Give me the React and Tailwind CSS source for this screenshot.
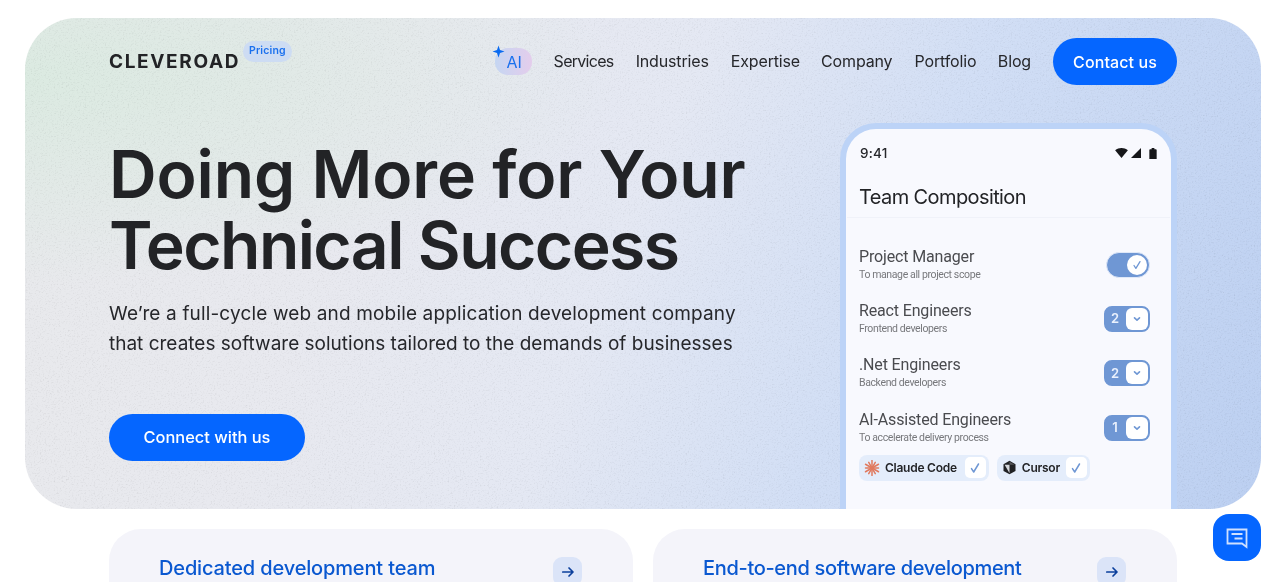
import React from "react";

const display = "font-['Inter','Liberation_Sans',sans-serif]";
const phoneFont = "font-['Roboto','Liberation_Sans',sans-serif]";

function Check({ className = "w-[14px] h-[14px]" }) {
  return (
    <svg viewBox="0 0 14 14" className={className} fill="none" stroke="#6f97d4" strokeWidth="1.5" strokeLinecap="round" strokeLinejoin="round">
      <path d="M3.500 7.600 5.700 11 10.500 3" />
    </svg>
  );
}

function Select({ value }) {
  return (
    <div className="flex h-[26px] w-[46px] items-center rounded-[8px] border-2 border-[#6f97d4] bg-[#6f97d4]">
      <span className={`flex-1 pr-[2px] text-center text-[13px] font-semibold text-[#eaf1fd] ${display}`}>{value}</span>
      <span className="flex h-[22px] w-[22px] items-center justify-center rounded-[6px] bg-white">
        <svg viewBox="0 0 10 10" className="h-[10px] w-[10px]" fill="none" stroke="#6f97d4" strokeWidth="1.6" strokeLinecap="round" strokeLinejoin="round">
          <path d="M2.500 3.800 5 6.200l2.500-2.400" />
        </svg>
      </span>
    </div>
  );
}

function Row({ title, sub, control }) {
  return (
    <div className="flex h-[54.2px] items-start justify-between">
      <div>
        <div className="text-[16px] leading-[19px] tracking-[-0.15px] text-[#4a4b4f]">{title}</div>
        <div className="mt-[2px] text-[10.5px] leading-[13px] tracking-[-0.38px] text-[#77787c]">{sub}</div>
      </div>
      <div className="mt-[5px]">{control}</div>
    </div>
  );
}

function Chip({ icon, label, gap }) {
  return (
    <div className="flex h-[26px] items-center rounded-[8px] bg-[#e4edfb] pl-[5px] pr-[3px]">
      {icon}
      <span className={`ml-[5px] text-[12px] font-semibold tracking-[-0.25px] text-[#222326] ${gap} ${display}`}>{label}</span>
      <span className="flex h-[21px] w-[21px] items-center justify-center rounded-[5px] bg-white">
        <Check />
      </span>
    </div>
  );
}

function ClaudeIcon() {
  const rays = [0, 30, 60, 90, 120, 150, 180, 210, 240, 270, 300, 330];
  return (
    <svg viewBox="0 0 16 16" className="h-[16px] w-[16px]">
      {rays.map((a) => (
        <line key={a} x1="8" y1="8" x2="8" y2={a % 60 === 0 ? 0.5 : 1.5} stroke="#e07a5f" strokeWidth="1.5" strokeLinecap="round" transform={`rotate(${a} 8 8)`} />
      ))}
    </svg>
  );
}

function CursorIcon() {
  return (
    <svg viewBox="0 0 16 16" className="h-[15px] w-[15px]">
      <path d="M8 .8 14.400 4.400v7.200L8 15.200 1.600 11.600V4.400z" fill="#202124" />
      <path d="M2.800 5 8 5v9.200z" fill="#f5f7fc" opacity="0.85" />
      <path d="M8 1.800 13.600 5H8z" fill="#55565a" />
    </svg>
  );
}

function Card({ title, tracking }) {
  return (
    <div className="flex h-[120px] flex-1 items-start justify-between rounded-[32px] bg-[#f4f4fa] pl-[50px] pr-[51px] pt-[26px]">
      <span className={`text-[20px] font-medium leading-[26px] text-[#0a58d0] ${tracking} ${display}`}>{title}</span>
      <span className="mt-[2px] flex h-[29px] w-[29px] items-center justify-center rounded-[9px] bg-[#dbe4f8]">
        <svg viewBox="0 0 14 14" className="h-[14px] w-[14px]" fill="none" stroke="#0b3f9c" strokeWidth="1.700" strokeLinecap="round" strokeLinejoin="round">
          <path d="M1.800 7h10M8 3l4 4-4 4" />
        </svg>
      </span>
    </div>
  );
}

export default function App() {
  return (
    <div className="relative h-[582px] w-[1280px] overflow-hidden bg-white pt-[18px]">
      <section className="relative ml-[25px] h-[491px] w-[1236px] overflow-hidden rounded-[52px] bg-[radial-gradient(ellipse_at_0%_12%,#dbeae1_0%,#dbeae100_34%),linear-gradient(112deg,#e8e9eb_0%,#e8e9ef_28%,#e4e8f3_48%,#d1def5_68%,#bbcff1_100%)] px-[84px] pt-[20px]">
        <svg className="pointer-events-none absolute inset-0 h-full w-full opacity-[0.14] mix-blend-hard-light" aria-hidden="true">
          <filter id="grain" colorInterpolationFilters="sRGB">
            <feTurbulence type="fractalNoise" baseFrequency="0.65" numOctaves="2" stitchTiles="stitch" />
            <feColorMatrix type="matrix" values="0.33 0.33 0.33 0 0 0.33 0.33 0.33 0 0 0.33 0.33 0.33 0 0 0 0 0 0 1" />
          </filter>
          <rect width="100%" height="100%" filter="url(#grain)" />
        </svg>

        <div className="relative">
          <header className="flex h-[47px] items-center justify-between">
            <div className="relative flex items-center pt-[1px]">
              <span className={`text-[19px] font-bold tracking-[1.65px] text-[#222326] ${display}`}>CLEVEROAD</span>
              <span className={`absolute left-[134px] top-[-6px] rounded-full bg-[#cddcf3] px-[6px] py-[2.5px] text-[10.5px] font-semibold leading-[16px] tracking-[0.15px] text-[#1a70ee] ${display}`}>Pricing</span>
            </div>
            <nav className={`flex items-center text-[16px] leading-[22px] tracking-[-0.15px] text-[#26272b] ${display}`}>
              <div className="relative mr-[22px] flex h-[27px] w-[37px] items-center justify-center rounded-[13px] bg-[linear-gradient(90deg,#c5d6f2,#e4cdec)] pl-[2px] text-[#1a70ee]">
                AI
                <svg viewBox="0 0 14 14" className="absolute left-[-4px] top-[-3px] h-[14px] w-[14px]" fill="#0b6bf0">
                  <path d="M7.500 0.500 9 5l4.500 1.500L9 8l-1.500 4.500L6 8 1.500 6.500 6 5z" />
                </svg>
              </div>
              <div className="mb-[1px] flex gap-[22px]">
                <span className="tracking-[-0.7px]">Services</span>
                <span>Industries</span>
                <span>Expertise</span>
                <span className="-ml-[1px]">Company</span>
                <span>Portfolio</span>
                <span className="ml-[-0.5px]">Blog</span>
              </div>
              <button className="ml-[22px] h-[47px] w-[124px] rounded-full bg-[#0566ff] text-[16px] font-medium tracking-[0.1px] text-white">Contact us</button>
            </nav>
          </header>

          <div className="flex items-start justify-between">
            <div className="pt-[54px]">
              <h1 className={`text-[66px] font-[570] leading-[71px] text-[#222326] ${display}`}>
                <span className="block tracking-[-0.15px]">Doing More for Your</span>
                <span className="block tracking-[-1.600px]">Technical Success</span>
              </h1>
              <p className={`mt-[18px] text-[19px] leading-[30px] text-[#26272b] ${display}`}>
                <span className="block tracking-[0.15px]">We’re a full-cycle web and mobile application development company</span>
                <span className="block tracking-[0px]">that creates software solutions tailored to the demands of businesses</span>
              </p>
              <button className={`mt-[55px] h-[47px] w-[196px] rounded-full bg-[#0566ff] text-[16.4px] font-medium text-white ${display}`}>Connect with us</button>
            </div>

            <div className="mt-[38px] h-[400px] w-[337px] rounded-t-[36px] bg-[#bcd3f7] px-[6px] pt-[6px]">
              <div className={`h-full rounded-t-[30px] bg-[#f8f9fe] ${phoneFont}`}>
                <div className="flex h-[48px] items-center justify-between pl-[14px] pr-[14px]">
                  <span className={`text-[13.5px] font-medium tracking-[0.2px] text-[#26272b] ${display}`}>9:41</span>
                  <div className="flex items-center gap-[3px]">
                    <svg viewBox="0 0 14 11" className="h-[10px] w-[13px]" fill="#16171a"><path d="M0 2.500C4-.8 10-.8 14 2.500L7 11z" /></svg>
                    <svg viewBox="0 0 11 11" className="h-[10px] w-[10px]" fill="#16171a"><path d="M11 0v11H0z" /></svg>
                    <svg viewBox="0 0 8 12" className="ml-[5px] h-[11px] w-[8px]" fill="#16171a"><path d="M2.500 0h3v1.300H7a1 1 0 0 1 1 1V12H0V2.300a1 1 0 0 1 1-1h1.500z" /></svg>
                  </div>
                </div>
                <div className="mx-[1px] flex h-[41px] items-start border-b border-[#f0f2f9] pl-[12px] pr-[6px] pt-[8px]">
                  <span className={`text-[20px] leading-[24px] tracking-[-0.6px] text-[#222326] ${display}`}>Team Composition</span>
                </div>
                <div className="pl-[13px] pr-[21px] pt-[29px]">
                  <Row
                    title="Project Manager"
                    sub="To manage all project scope"
                    control={
                      <div className="flex h-[26px] w-[44px] items-center justify-end rounded-full border border-[#dfe8f8] bg-[#6f97d4] pr-[2px]">
                        <span className="flex h-[20px] w-[20px] items-center justify-center rounded-full bg-white">
                          <Check className="h-[12px] w-[12px]" />
                        </span>
                      </div>
                    }
                  />
                  <Row title="React Engineers" sub="Frontend developers" control={<Select value="2" />} />
                  <Row title=".Net Engineers" sub="Backend developers" control={<Select value="2" />} />
                  <Row title="AI-Assisted Engineers" sub="To accelerate delivery process" control={<Select value="1" />} />
                  <div className="mt-[-9px] flex gap-[8px]">
                    <Chip icon={<ClaudeIcon />} label="Claude Code" gap="mr-[8px]" />
                    <Chip icon={<CursorIcon />} label="Cursor" gap="mr-[6px]" />
                  </div>
                </div>
              </div>
            </div>
          </div>
        </div>
      </section>

      <div className="ml-[109px] mt-[20px] flex w-[1068px] gap-[20px]">
        <Card title="Dedicated development team" tracking="tracking-[-0.15px]" />
        <Card title="End-to-end software development" tracking="tracking-[-0.33px]" />
      </div>

      <button className="absolute left-[1213px] top-[514px] flex h-[47px] w-[48px] items-center justify-center rounded-[16px] bg-[#0566ff]" aria-label="Chat">
        <svg viewBox="0 0 24 24" className="h-[24px] w-[24px]" fill="none" stroke="#cfe0ff" strokeWidth="1.800">
          <path d="M2.500 3.500h19V21l-4.500-3.500H2.500z" strokeLinejoin="miter" />
          <path d="M6.500 8h11M9.500 12.500h8" />
        </svg>
      </button>
    </div>
  );
}
